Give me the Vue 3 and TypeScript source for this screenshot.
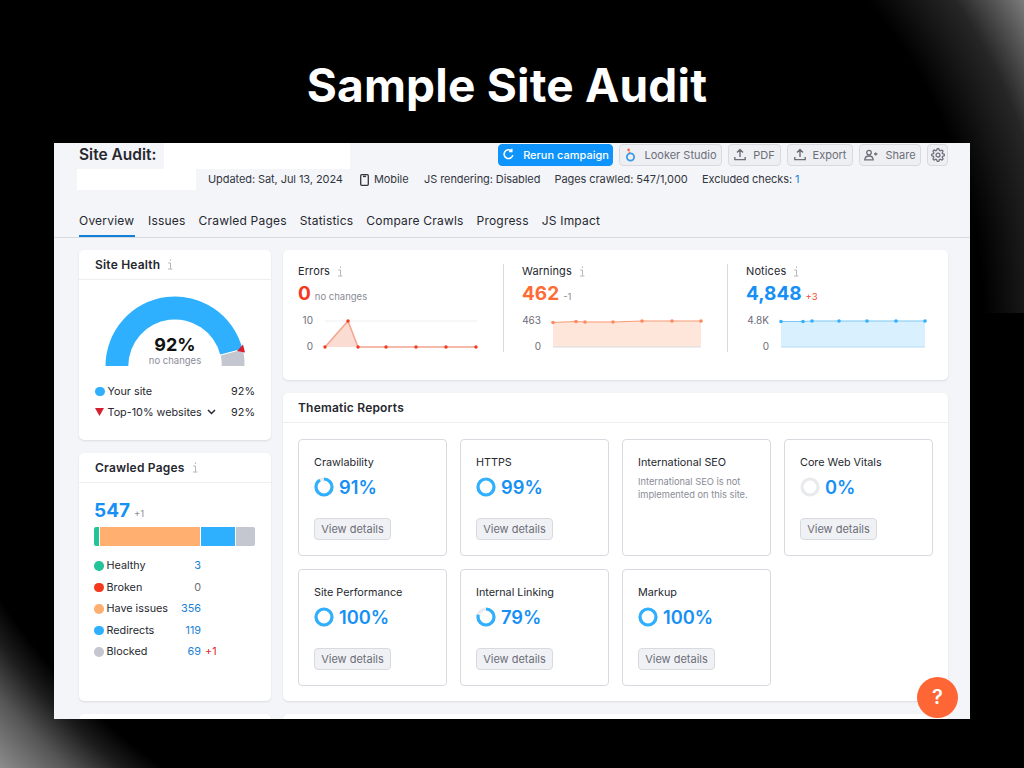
<script setup lang="ts">
interface Report { name: string; pct?: number; note?: string }
const reports: Report[] = [
  { name: 'Crawlability', pct: 91 },
  { name: 'HTTPS', pct: 99 },
  { name: 'International SEO', note: 'International SEO is not implemented on this site.' },
  { name: 'Core Web Vitals', pct: 0 },
  { name: 'Site Performance', pct: 100 },
  { name: 'Internal Linking', pct: 79 },
  { name: 'Markup', pct: 100 },
]
const tabs = ['Overview', 'Issues', 'Crawled Pages', 'Statistics', 'Compare Crawls', 'Progress', 'JS Impact']
const rows = [
  { name: 'Healthy', val: '3', color: '#25c39a', link: true, delta: '' },
  { name: 'Broken', val: '0', color: '#f5391f', link: false, delta: '' },
  { name: 'Have issues', val: '356', color: '#ffb070', link: true, delta: '' },
  { name: 'Redirects', val: '119', color: '#2fb0ff', link: true, delta: '' },
  { name: 'Blocked', val: '69', color: '#c4c7cf', link: true, delta: '+1' },
]
const R = 8
const C = 2 * Math.PI * R
const dash = (p: number) => `${(C * p) / 100} ${C}`

const pts = (xs: number[], ys: number[]) => xs.map((x, i) => `${x},${ys[i]}`).join(' ')
const errX = [325, 348, 358, 386, 416, 446, 476]
const errY = [347, 321, 347, 347, 347, 347, 347]
const warnX = [553, 576, 585, 613, 642, 672, 701]
const warnY = [322.5, 321.5, 322, 322, 321, 321, 321]
const noteX = [781, 803, 812, 839, 867, 896, 925]
const noteY = [321.5, 321.5, 321, 321, 321, 321, 321]
</script>

<template>
  <div class="page">
    <div class="glow glow-tr"></div>
    <div class="glow glow-bl"></div>
    <h1 class="title">Sample Site Audit</h1>

    <main class="panel">
      <header class="top">
        <div class="top-left">
          <span class="audit">Site Audit:</span>
          <span class="mask mask-a"></span>
        </div>
        <div class="actions">
          <button class="btn primary">
            <svg width="13" height="13" viewBox="0 0 14 14" fill="none" stroke="#fff" stroke-width="1.7"><path d="M11.6 7.6A4.7 4.7 0 1 1 10.2 3.2"/><path d="M10.6 .8v3h-3" stroke-width="1.5"/></svg>
            Rerun campaign
          </button>
          <button class="btn looker">
            <svg width="13" height="16" viewBox="0 0 13 16" fill="none"><circle cx="6.5" cy="10" r="3.6" stroke="#3a9be8" stroke-width="1.8"/><circle cx="4.6" cy="2.8" r="1.4" fill="#f0704a"/><path d="M5 4.6 6 6" stroke="#f0704a" stroke-width="1.2"/></svg>
            Looker Studio
          </button>
          <button class="btn">
            <svg width="12" height="13" viewBox="0 0 12 13" fill="none" stroke="#6c6e79" stroke-width="1.4"><path d="M6 9V2M3 4.6 6 1.6l3 3M.8 9v2.6h10.4V9"/></svg>
            PDF
          </button>
          <button class="btn">
            <svg width="12" height="13" viewBox="0 0 12 13" fill="none" stroke="#6c6e79" stroke-width="1.4"><path d="M6 9V2M3 4.6 6 1.6l3 3M.8 9v2.6h10.4V9"/></svg>
            Export
          </button>
          <button class="btn">
            <svg width="14" height="12" viewBox="0 0 14 12" fill="none" stroke="#6c6e79" stroke-width="1.3"><circle cx="5" cy="3.6" r="2.3"/><path d="M.8 10.800c.2-2.600 1.800-3.800 4.200-3.800s4 1.200 4.200 3.800z"/><path d="M10 5h3.400M11.700 3.400v3.200"/></svg>
            Share
          </button>
          <button class="btn gear" aria-label="Settings">
            <svg width="14" height="14" viewBox="0 0 24 24" fill="none" stroke="#6c6e79" stroke-width="2.2"><circle cx="12" cy="12" r="3.4"/><path d="M19.4 15a1.7 1.7 0 0 0 .3 1.8l.1.1a2 2 0 1 1-2.9 2.9l-.1-.1a1.7 1.7 0 0 0-2.8 1.200V21a2 2 0 1 1-4 0v-.1a1.7 1.7 0 0 0-2.900-1.200l-.1.1a2 2 0 1 1-2.800-2.900l.1-.1a1.700 1.700 0 0 0-1.200-2.800H3a2 2 0 1 1 0-4h.1a1.700 1.700 0 0 0 1.200-2.900l-.1-.1a2 2 0 1 1 2.900-2.800l.1.1a1.700 1.700 0 0 0 2.800-1.200V3a2 2 0 1 1 4 0v.1a1.700 1.700 0 0 0 2.800 1.200l.1-.1a2 2 0 1 1 2.900 2.900l-.1.1a1.700 1.700 0 0 0 1.200 2.800h.1a2 2 0 1 1 0 4h-.1a1.700 1.700 0 0 0-1.500 1z"/></svg>
          </button>
        </div>
      </header>

      <div class="meta">
        <span class="mask mask-b"></span>
        <span class="m-updated">Updated: Sat, Jul 13, 2024</span>
        <span class="m-mobile">
          <svg width="9" height="12" viewBox="0 0 9 12" fill="none" stroke="#33353f" stroke-width="1.3"><rect x=".7" y=".7" width="7.600" height="10.600" rx="1"/><path d="M3 2.400h3" stroke-width="1.500"/></svg>
          Mobile
        </span>
        <span class="m-js">JS rendering: Disabled</span>
        <span class="m-pages">Pages crawled: 547/1,000</span>
        <span>Excluded checks: <a class="lnk">1</a></span>
      </div>

      <nav class="tabs">
        <span v-for="(t, i) in tabs" :key="t" class="tab" :class="{ active: i === 0 }">{{ t }}</span>
      </nav>

      <div class="body">
        <aside class="side">
          <section class="card health">
            <div class="card-head">
              <span>Site Health</span>
              <svg class="info" width="6" height="11" viewBox="0 0 6 11" fill="none" stroke="#b4b6bd"><path d="M3.600 .4v1.600M1.200 4h2.300v5.800M1 10h4.400"/></svg>
            </div>
            <div class="gauge">
              <svg width="140" height="70" viewBox="105 296 140 70">
                <path d="M105.500 366A69.500 69.500 0 0 1 242.300 348.700L220.200 354.400A46.700 46.700 0 0 0 128.300 366Z" fill="#2fb0ff"/>
                <path d="M220.800 355.400 243 349.600A69.500 69.500 0 0 1 244.500 366H221.700A46.700 46.700 0 0 0 220.800 355.400Z" fill="#c4c7cf"/>
                <path d="M237 351 243 344.500 245 352.500Z" fill="#d6202f"/>
              </svg>
              <div class="gauge-text">
                <strong>92%</strong>
                <small>no changes</small>
              </div>
            </div>
            <div class="legend">
              <div class="lrow">
                <i class="dot" style="background:#2fb0ff"></i>
                <span>Your site</span>
                <b>92%</b>
              </div>
              <div class="lrow">
                <svg class="tri" width="9" height="8" viewBox="0 0 9 8"><path d="M0 0h9L4.500 8z" fill="#d6202f"/></svg>
                <span>Top-10% websites</span>
                <svg class="chev" width="9" height="6" viewBox="0 0 9 6" fill="none" stroke="#26282f" stroke-width="1.500"><path d="M1 1l3.500 3.500L8 1"/></svg>
                <b>92%</b>
              </div>
            </div>
          </section>

          <section class="card crawled">
            <div class="card-head">
              <span>Crawled Pages</span>
              <svg class="info" width="6" height="11" viewBox="0 0 6 11" fill="none" stroke="#b4b6bd"><path d="M3.600 .4v1.600M1.200 4h2.300v5.800M1 10h4.400"/></svg>
            </div>
            <div class="crawled-body">
              <div class="count"><strong>547</strong><small>+1</small></div>
              <div class="bar">
                <i style="width:5px;background:#25c39a"></i>
                <i style="width:100px;background:#ffb070"></i>
                <i style="width:34px;background:#2fb0ff"></i>
                <i style="width:19px;background:#c4c7cf"></i>
              </div>
              <div v-for="r in rows" :key="r.name" class="crow">
                <i class="dot" :style="{ background: r.color }"></i>
                <span class="cname">{{ r.name }}</span>
                <span class="cval" :class="{ lnk: r.link }">{{ r.val }}</span>
                <span class="cdelta">{{ r.delta }}</span>
              </div>
            </div>
          </section>

          <section class="card stub"></section>
        </aside>

        <div class="content">
          <section class="card stats">
            <div class="stat">
              <div class="stat-name">Errors
                <svg class="info" width="6" height="11" viewBox="0 0 6 11" fill="none" stroke="#b4b6bd"><path d="M3.600 .4v1.600M1.200 4h2.300v5.800M1 10h4.400"/></svg>
              </div>
              <div class="stat-val"><strong class="red">0</strong><small class="grey">no changes</small></div>
              <svg class="chart" width="190" height="42" viewBox="298 312 190 42">
                <text x="313" y="324" text-anchor="end" class="axis">10</text>
                <text x="313" y="350" text-anchor="end" class="axis">0</text>
                <line x1="325" y1="321" x2="477" y2="321" stroke="#eceef2"/>
                <polygon points="325,347 348,321 358,347" fill="#fbdcd2"/>
                <polyline :points="pts(errX, errY)" fill="none" stroke="#f4a48f" stroke-width="1.500"/>
                <circle v-for="(x, i) in errX" :key="x" :cx="x" :cy="errY[i]" r="1.700" fill="#f5391f"/>
              </svg>
            </div>
            <div class="stat">
              <div class="stat-name">Warnings
                <svg class="info" width="6" height="11" viewBox="0 0 6 11" fill="none" stroke="#b4b6bd"><path d="M3.600 .4v1.600M1.200 4h2.300v5.800M1 10h4.400"/></svg>
              </div>
              <div class="stat-val"><strong class="orange">462</strong><small class="grey">-1</small></div>
              <svg class="chart" width="190" height="42" viewBox="522 312 190 42">
                <text x="541" y="324" text-anchor="end" class="axis">463</text>
                <text x="541" y="350" text-anchor="end" class="axis">0</text>
                <polygon :points="`553,347 ${pts(warnX, warnY)} 701,347`" fill="#ffe6da"/>
                <line x1="553" y1="347" x2="701" y2="347" stroke="#d9dbe2"/>
                <polyline :points="pts(warnX, warnY)" fill="none" stroke="#fb9a75" stroke-width="1.200"/>
                <circle v-for="(x, i) in warnX" :key="x" :cx="x" :cy="warnY[i]" r="1.800" fill="#fb8a62"/>
              </svg>
            </div>
            <div class="stat">
              <div class="stat-name">Notices
                <svg class="info" width="6" height="11" viewBox="0 0 6 11" fill="none" stroke="#b4b6bd"><path d="M3.600 .4v1.600M1.200 4h2.300v5.800M1 10h4.400"/></svg>
              </div>
              <div class="stat-val"><strong class="blue">4,848</strong><small class="delta-red">+3</small></div>
              <svg class="chart" width="190" height="42" viewBox="746 312 190 42">
                <text x="769" y="324" text-anchor="end" class="axis">4.8K</text>
                <text x="769" y="350" text-anchor="end" class="axis">0</text>
                <polygon :points="`781,347 ${pts(noteX, noteY)} 925,347`" fill="#d9f0fe"/>
                <line x1="781" y1="347" x2="925" y2="347" stroke="#b4dcf5"/>
                <polyline :points="pts(noteX, noteY)" fill="none" stroke="#7cc8f5" stroke-width="1.200"/>
                <circle v-for="(x, i) in noteX" :key="x" :cx="x" :cy="noteY[i]" r="1.800" fill="#2fb0ff"/>
              </svg>
            </div>
          </section>

          <section class="card thematic">
            <div class="card-head wide">Thematic Reports</div>
            <div class="grid">
              <article v-for="r in reports" :key="r.name" class="report">
                <div class="rname">{{ r.name }}</div>
                <p v-if="r.note" class="rnote">{{ r.note }}</p>
                <template v-else>
                  <div class="rval">
                    <svg width="20" height="20" viewBox="0 0 20 20" fill="none">
                      <circle cx="10" cy="10" :r="R" stroke="#e9eaee" stroke-width="3.200"/>
                      <circle cx="10" cy="10" :r="R" stroke="#2fb0ff" stroke-width="3.200" :stroke-dasharray="dash(r.pct ?? 0)" transform="rotate(-90 10 10)"/>
                    </svg>
                    <strong>{{ r.pct }}%</strong>
                  </div>
                  <button class="vd">View details</button>
                </template>
              </article>
            </div>
          </section>

          <section class="card stub"></section>
        </div>
      </div>

      <button class="help" aria-label="Help">?</button>
    </main>
  </div>
</template>

<style>
html, body { margin: 0; background: #000; }
</style>

<style scoped>
.page {
  position: relative;
  width: 1024px;
  height: 768px;
  background: #000;
  overflow: hidden;
  font-family: Inter, "Liberation Sans", sans-serif;
}
.glow { position: absolute; }
.glow-tr {
  left: 824px;
  top: 0;
  width: 200px;
  height: 313px;
  background: radial-gradient(circle at -336px 319px, #000 495px, #141414 530px, #262626 565px, #585858 600px, #858585 630px);
}
.glow-bl {
  left: 0;
  top: 600px;
  width: 200px;
  height: 168px;
  background: radial-gradient(circle at 520px -340px, #000 620px, #1c1c1c 645px, #565656 680px, #8a8a8a 725px);
}
.title {
  position: relative;
  margin: 0;
  height: 143px;
  box-sizing: border-box;
  padding: 58px 10px 0 0;
  text-align: center;
  color: #fff;
  font-size: 46px;
  line-height: 54px;
  font-weight: 700;
  letter-spacing: .2px;
  font-family: Inter, sans-serif;
}
.panel {
  position: relative;
  margin-left: 54px;
  width: 916px;
  height: 576px;
  background: #f4f5f9;
  overflow: hidden;
  color: #26282f;
  font-size: 11.500px;
}
.top {
  display: flex;
  justify-content: space-between;
  padding: 0 22px 0 25px;
  height: 26px;
}
.top-left { display: flex; }
.audit { font-size: 15.500px; font-weight: 600; line-height: 23px; width: 85px; white-space: nowrap; }
.mask { display: block; background: #fff; }
.mask-a { width: 186px; height: 26px; }
.actions { display: flex; gap: 6px; padding-top: 1px; }
.btn {
  display: flex;
  align-items: center;
  justify-content: center;
  gap: 7px;
  height: 22px;
  padding: 0 0 1px;
  box-sizing: border-box;
  border: 1px solid #d8dae0;
  border-radius: 4px;
  background: #eeeff3;
  color: #6c6e79;
  font: 11px Inter, sans-serif;
  white-space: nowrap;
}
.primary { width: 115px; gap: 8px; background: #0f94fb; border-color: #0f94fb; color: #fff; font-weight: 500; }
.looker { width: 103px; }
.btn.gear { width: 21px; padding: 0; }
.btn:nth-child(3) { width: 53px; }
.btn:nth-child(4) { width: 66px; }
.btn:nth-child(5) { width: 62px; }
.meta {
  display: flex;
  align-items: flex-start;
  height: 21px;
  padding-left: 23px;
  font-size: 11px;
  line-height: 21px;
  letter-spacing: -.08px;
  color: #33353f;
}
.mask-b { width: 119px; height: 21px; }
.m-updated { margin-left: 12px; width: 152px; }
.m-mobile { display: flex; align-items: center; gap: 5px; width: 64px; }
.m-js { width: 130.500px; }
.m-pages { width: 147.500px; }
.lnk { color: #1c7fd6; }
.tabs {
  display: flex;
  gap: 13px;
  margin-top: 20px;
  height: 27px;
  padding-left: 25px;
  border-bottom: 1px solid #d8dae0;
  box-sizing: content-box;
  font-size: 12px;
  letter-spacing: .2px;
}
.tab { height: 27px; line-height: 21px; box-sizing: border-box; }
.tab.active { width: 56px; border-bottom: 2px solid #0f7fd8; }
.body {
  display: flex;
  gap: 12px;
  padding: 12px 22px 0 25px;
}
.side { width: 192px; display: flex; flex-direction: column; gap: 13px; }
.content { width: 665px; display: flex; flex-direction: column; gap: 13px; }
.card {
  background: #fff;
  border-radius: 5px;
  box-shadow: 0 1px 2px rgba(40, 44, 60, .12);
}
.card-head {
  display: flex;
  align-items: center;
  gap: 7px;
  height: 29px;
  padding-left: 16px;
  border-bottom: 1px solid #eceef2;
  font-size: 12px;
  font-weight: 600;
  letter-spacing: .2px;
  box-sizing: content-box;
}
.card-head.wide { padding-left: 15px; }
.health { height: 190px; }
.gauge { position: relative; display: flex; justify-content: center; padding-top: 16px; }
.gauge svg { display: block; }
.gauge-text {
  position: absolute;
  left: 0;
  right: 0;
  top: 54px;
  display: flex;
  flex-direction: column;
  align-items: center;
}
.gauge-text strong { font-size: 18px; line-height: 22px; font-weight: 700; color: #111; }
.gauge-text small { font-size: 9.500px; line-height: 9px; color: #8a8c96; }
.legend { padding: 18px 16px 0; display: flex; flex-direction: column; gap: 6.500px; }
.lrow { display: flex; align-items: center; height: 14.500px; font-size: 10.800px; }
.lrow b { margin-left: auto; font-weight: 400; }
.dot { display: block; width: 9.500px; height: 9.500px; border-radius: 50%; margin-right: 3px; flex: none; }
.tri { margin-right: 3.500px; }
.chev { margin-left: 5px; }
.crawled { height: 248px; }
.crawled-body { padding: 14px 16px 0 15px; }
.count { display: flex; align-items: baseline; gap: 4px; height: 30px; }
.count strong { font-size: 19px; line-height: 28px; font-weight: 700; color: #1690f5; }
.count small { font-size: 9.500px; color: #8a8c96; }
.bar { display: flex; gap: 1px; height: 19px; margin-bottom: 9px; width: 161px; border-radius: 2px; overflow: hidden; }
.bar i { display: block; height: 100%; }
.crow { display: flex; align-items: center; height: 21.500px; font-size: 10.800px; }
.cname { width: 68.500px; white-space: nowrap; }
.cval { width: 26px; text-align: right; color: #6c6e79; }
.cval.lnk { color: #1c7fd6; }
.cdelta { margin-left: 4px; color: #e5231b; }
.stub { height: 60px; }
.stats { display: grid; grid-template-columns: repeat(3, 224px); height: 130px; padding-left: 15px; box-sizing: border-box; padding-top: 14px; width: 665px; }
.stat { width: 206px; height: 88px; box-sizing: border-box; }
.stat:nth-child(-n+2) { border-right: 1px solid #d8dae0; }
.stat-name { display: flex; align-items: center; gap: 7px; height: 14px; font-size: 11px; letter-spacing: .1px; }
.stat-val { display: flex; align-items: baseline; gap: 4px; height: 29px; padding-top: 3px; box-sizing: border-box; }
.stat-val strong { font-size: 19px; line-height: 26px; font-weight: 700; }
.stat-val small { font-size: 9.500px; }
.red { color: #f5391f; }
.orange { color: #ff6b35; }
.blue { color: #1690f5; }
.grey { color: #8a8c96; }
.delta-red { color: #f0503a; }
.chart { display: block; margin-top: 5px; }
.axis { font: 10px Inter, sans-serif; fill: #6c6e79; }
.thematic { height: 308px; }
.grid {
  display: grid;
  grid-template-columns: repeat(4, 149px);
  grid-auto-rows: 117px;
  gap: 13px;
  padding: 16px 0 0 15px;
}
.report {
  border: 1px solid #d8dae0;
  border-radius: 4px;
  padding: 16px 15px 0;
  box-sizing: border-box;
  display: flex;
  flex-direction: column;
}
.rname { font-size: 10.800px; line-height: 14px; color: #26282f; }
.rnote { margin: 6px 0 0; font-size: 9.300px; line-height: 12.500px; color: #8a8c96; }
.rval { display: flex; align-items: center; gap: 5px; margin-top: 6px; height: 22px; }
.rval svg { display: block; }
.rval strong { font-size: 18.300px; font-weight: 600; color: #1690f5; }
.vd {
  width: 77px;
  height: 22px;
  margin-top: 20px;
  padding: 0;
  border: 1px solid #d8dae0;
  border-radius: 4px;
  background: #f0f1f4;
  color: #6c6e79;
  font: 11px Inter, sans-serif;
}
.help {
  position: absolute;
  left: 863px;
  top: 534px;
  width: 41px;
  height: 41px;
  border: 0;
  border-radius: 50%;
  padding: 0;
  background: #ff6636;
  color: #fff;
  font: 600 20px/41px Inter, sans-serif;
}
</style>
